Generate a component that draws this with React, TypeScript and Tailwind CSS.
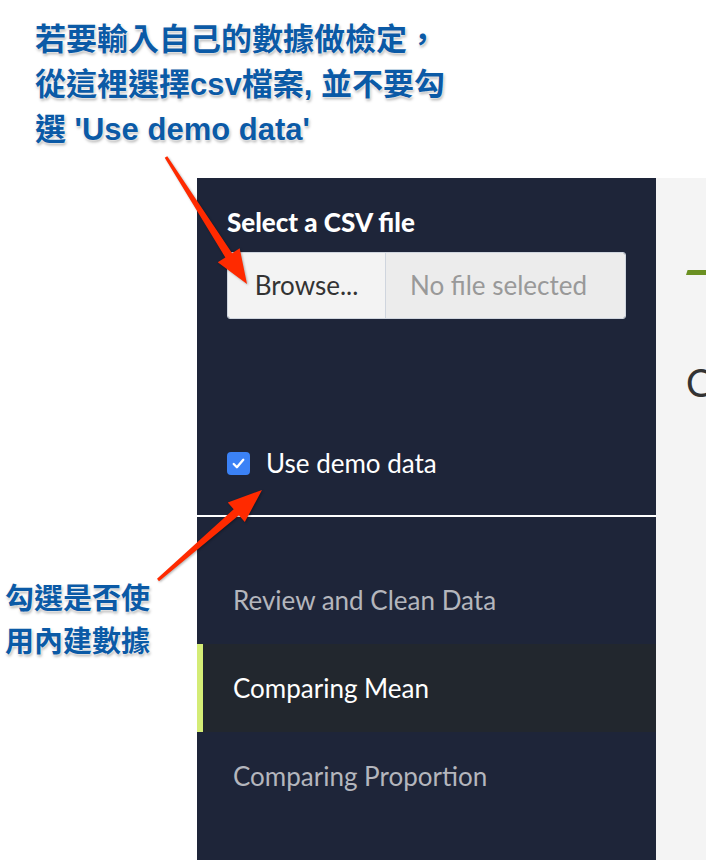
import React from "react";

const cjk = '"Noto Sans CJK TC", "Noto Sans", sans-serif';
const ui = 'Lato, "Noto Sans", sans-serif';

const glow =
  "0 0 2px #fff, 0 0 3px #fff, 1px 2px 3px rgba(0,0,0,0.35)";

const Arrow = ({ className, x1, y1, x2, y2 }: { className: string; x1: number; y1: number; x2: number; y2: number }) => {
  const dx = x2 - x1;
  const dy = y2 - y1;
  const len = Math.hypot(dx, dy);
  const ux = dx / len;
  const uy = dy / len;
  const head = 34;
  const bx = x2 - ux * head;
  const by = y2 - uy * head;
  const px = -uy;
  const py = ux;
  const pts = [
    [x1 + px * 1.5, y1 + py * 1.5],
    [bx + px * 4, by + py * 4],
    [bx + px * 13, by + py * 13],
    [x2, y2],
    [bx - px * 13, by - py * 13],
    [bx - px * 4, by - py * 4],
    [x1 - px * 1.5, y1 - py * 1.5],
  ]
    .map((p) => p.join(","))
    .join(" ");
  return (
    <svg className={className} width="706" height="860" viewBox="0 0 706 860">
      <polygon points={pts} fill="#ff2a00" style={{ filter: "drop-shadow(1px 1px 1px rgba(0,0,0,0.3))" }} />
    </svg>
  );
};

const NavItem = ({ label, active }: { label: string; active?: boolean }) => (
  <div
    className={
      active
        ? "flex h-[88px] items-center border-l-[6px] border-[#d4ec76] bg-[#22272e] pl-[30px] text-white"
        : "flex h-[88px] items-center pl-[36px] text-[#b4b6bd]"
    }
  >
    <span className="text-[26px]">{label}</span>
  </div>
);

export default function App() {
  return (
    <div className="relative h-[860px] w-[706px] overflow-hidden bg-white" style={{ fontFamily: ui }}>
      <div className="h-[178px] pl-[35px] pt-[17px]">
        <div
          className="text-[31px] font-bold leading-[45px] text-[#0b5aa6]"
          style={{ textShadow: glow, fontFamily: 'Arial, "Liberation Sans", "Noto Sans CJK TC", sans-serif' }}
        >
          <p>若要輸入自己的數據做檢定，</p>
          <p>從這裡選擇csv檔案, 並不要勾</p>
          <p>選 'Use demo data'</p>
        </div>
      </div>

      <div className="flex h-[682px]">
        <div className="w-[197px] shrink-0 bg-white">
          <div
            className="mt-[397px] pl-[5px] text-[29px] font-bold leading-[43px] text-[#0b5aa6]"
            style={{ textShadow: glow, fontFamily: cjk }}
          >
            <p>勾選是否使</p>
            <p>用內建數據</p>
          </div>
        </div>

        <div className="w-[459px] shrink-0 bg-[#1e2539]">
          <div className="px-[30px] pt-[27px]">
            <p className="text-[26px] font-black leading-[34px] text-white">Select a CSV file</p>
            <div className="mt-[13px] flex h-[67px] w-[399px] overflow-hidden rounded-[3px] border border-[#cfd5de]">
              <div className="flex w-[158px] items-center justify-center border-r border-[#cfd5de] bg-[#f3f3f3] text-[26px] text-[#333]">
                Browse...
              </div>
              <div className="flex flex-1 items-center bg-[#ececec] pl-[24px] text-[26px] text-[#999]">
                No file selected
              </div>
            </div>
          </div>

          <div className="mt-[125px] flex items-center gap-[16px] pl-[30px]">
            <div className="flex h-[23px] w-[23px] items-center justify-center rounded-[4px] bg-[#3b82f6]">
              <svg width="17" height="17" viewBox="0 0 16 16">
                <path d="M3.5 8.5 6.5 11.5 12.5 4.5" fill="none" stroke="#fff" strokeWidth="2.2" strokeLinecap="round" strokeLinejoin="round" />
              </svg>
            </div>
            <span className="text-[26px] text-white">Use demo data</span>
          </div>

          <div className="mt-[32px] h-[2px] bg-white" />

          <div className="mt-[39px]">
            <NavItem label="Review and Clean Data" />
            <NavItem label="Comparing Mean" active />
            <NavItem label="Comparing Proportion" />
          </div>
        </div>

        <div className="flex-1 overflow-hidden bg-[#f4f4f4] pl-[30px]">
          <div className="mt-[92px] h-[5px] w-[40px] bg-[#6b9022]" style={{ clipPath: "polygon(4% 0,100% 0,100% 100%,0 100%)" }} />
          <p className="mt-[88px] whitespace-nowrap text-[38px] leading-none text-[#333]">C</p>
        </div>
      </div>

      <Arrow className="pointer-events-none absolute left-0 top-0" x1={166} y1={157} x2={247} y2={284} />
      <Arrow className="pointer-events-none absolute left-0 top-0" x1={158} y1={580} x2={262} y2={490} />
    </div>
  );
}
